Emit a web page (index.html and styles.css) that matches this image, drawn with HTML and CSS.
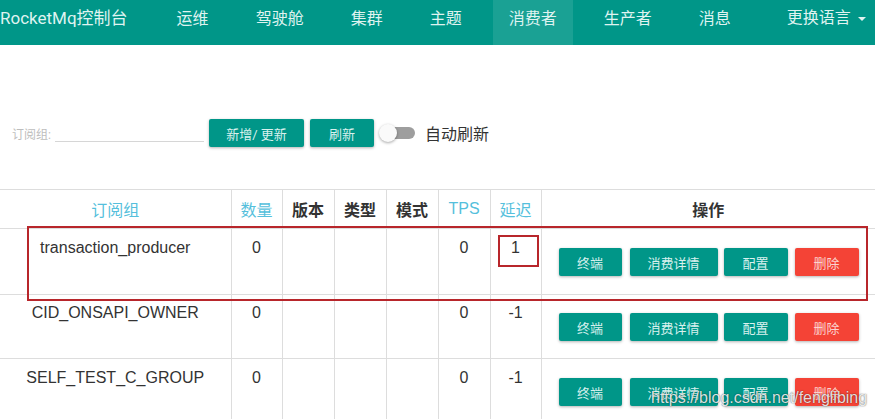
FILE: index.html
```html
<!DOCTYPE html>
<html lang="zh">
<head>
<meta charset="utf-8">
<title>RocketMq控制台</title>
<link rel="stylesheet" href="styles.css">
</head>
<body>
<nav class="navbar">
  <div class="brand">RocketMq控制台</div>
  <ul class="nav-items">
    <li>运维</li>
    <li>驾驶舱</li>
    <li>集群</li>
    <li>主题</li>
    <li class="active">消费者</li>
    <li>生产者</li>
    <li>消息</li>
  </ul>
  <div class="lang">更换语言<span class="caret"></span></div>
</nav>

<div class="toolbar">
  <span class="label">订阅组:</span>
  <div class="input"></div>
  <button class="btn btn-add">新增/ 更新</button>
  <button class="btn btn-refresh">刷新</button>
  <div class="toggle"><span class="track"></span><span class="knob"></span></div>
  <span class="toggle-label">自动刷新</span>
</div>

<div class="table-wrap">
  <table class="grid">
    <colgroup>
      <col class="c-group"><col class="c-num"><col class="c-num2"><col class="c-num2"><col class="c-num2"><col class="c-num2"><col class="c-num"><col>
    </colgroup>
    <thead>
      <tr>
        <th class="sort">订阅组</th>
        <th class="sort">数量</th>
        <th>版本</th>
        <th>类型</th>
        <th>模式</th>
        <th class="sort">TPS</th>
        <th class="sort">延迟</th>
        <th>操作</th>
      </tr>
    </thead>
    <tbody>
      <tr class="r1">
        <td>transaction_producer</td>
        <td>0</td><td></td><td></td><td></td>
        <td>0</td><td>1</td>
        <td class="ops"><div class="ops-row"><button class="btn b1">终端</button><button class="btn b2">消费详情</button><button class="btn b3">配置</button><button class="btn b4 danger">删除</button></div></td>
      </tr>
      <tr class="r2">
        <td>CID_ONSAPI_OWNER</td>
        <td>0</td><td></td><td></td><td></td>
        <td>0</td><td>-1</td>
        <td class="ops"><div class="ops-row"><button class="btn b1">终端</button><button class="btn b2">消费详情</button><button class="btn b3">配置</button><button class="btn b4 danger">删除</button></div></td>
      </tr>
      <tr class="r3">
        <td>SELF_TEST_C_GROUP</td>
        <td>0</td><td></td><td></td><td></td>
        <td>0</td><td>-1</td>
        <td class="ops"><div class="ops-row"><button class="btn b1">终端</button><button class="btn b2">消费详情</button><button class="btn b3">配置</button><button class="btn b4 danger">删除</button></div></td>
      </tr>
    </tbody>
  </table>
</div>

<div class="mark mark-row"></div>
<div class="mark mark-cell"></div>
<div class="watermark">https://blog.csdn.net/fenglibing</div>
</body>
</html>
```

FILE: styles.css
```css
html, body {
  margin: 0;
  padding: 0;
  background: #fff;
  overflow: hidden;
}
body {
  width: 875px;
  height: 419px;
  position: relative;
  font-family: Roboto, "Noto Sans CJK SC", sans-serif;
  color: #333;
}

/* navbar */
.navbar {
  display: flex;
  align-items: flex-start;
  height: 45px;
  background: #009688;
  color: #dff3f0;
}
.brand {
  font-size: 17px;
  line-height: 37px;
  margin-right: 33px;
  white-space: nowrap;
}
.nav-items {
  display: flex;
  gap: 15px;
  list-style: none;
  margin: 0;
  padding: 0;
}
.nav-items li {
  font-size: 16px;
  line-height: 37px;
  height: 45px;
  padding: 0 16px;
  white-space: nowrap;
}
.nav-items li.active {
  background: #1aa194;
}
.lang {
  margin-left: 40px;
  font-size: 16px;
  line-height: 35px;
  white-space: nowrap;
  display: flex;
  align-items: center;
}
.caret {
  display: inline-block;
  width: 0;
  height: 0;
  margin-left: 7px;
  margin-top: 2px;
  border-left: 4px solid transparent;
  border-right: 4px solid transparent;
  border-top: 4px solid #dff3f0;
}

/* toolbar */
.toolbar {
  display: flex;
  align-items: center;
  height: 28px;
  margin-top: 74px;
  padding-left: 12px;
}
.label {
  font-size: 12px;
  color: #bdbdbd;
}
.input {
  width: 149px;
  height: 17px;
  margin-left: 4px;
  border-bottom: 1px solid #d6d6d6;
}
.btn {
  border: none;
  border-radius: 2px;
  background: #009688;
  color: #d9f1ee;
  font-family: Roboto, "Noto Sans CJK SC", sans-serif;
  font-size: 13px;
  height: 28px;
  padding: 0;
  box-shadow: 0 1px 3px rgba(0, 0, 0, 0.3);
}
.btn-add {
  width: 95px;
  margin-left: 5px;
}
.btn-refresh {
  width: 64px;
  margin-left: 6px;
}
.toggle {
  position: relative;
  width: 36px;
  height: 18px;
  margin-left: 5px;
}
.track {
  position: absolute;
  left: 4px;
  top: 3px;
  width: 32px;
  height: 12px;
  border-radius: 6px;
  background: #9e9e9e;
}
.knob {
  position: absolute;
  left: 0;
  top: 0;
  width: 18px;
  height: 18px;
  border-radius: 50%;
  background: #fafafa;
  box-shadow: 0 1px 3px rgba(0, 0, 0, 0.35);
}
.toggle-label {
  margin-left: 10px;
  font-size: 16px;
  color: #333;
}

/* table */
.table-wrap {
  margin-top: 42px;
}
.grid {
  width: 875px;
  border-collapse: collapse;
  table-layout: fixed;
}
.c-group { width: 231px; }
.c-num { width: 51px; }
.c-num2 { width: 52px; }
.grid th, .grid td {
  border: 1px solid #dddddd;
  padding: 0;
  text-align: center;
  font-family: "Liberation Sans", "Noto Sans CJK SC", sans-serif;
}
.grid tr > :first-child { border-left: none; }
.grid tr > :last-child { border-right: none; }
.grid th {
  height: 38px;
  font-size: 16px;
  font-weight: bold;
  color: #333;
}
.grid th.sort {
  font-weight: normal;
  color: #55bfdc;
}
.grid td {
  vertical-align: top;
  font-size: 16px;
  line-height: 18px;
  padding-top: 10px;
  color: #333;
}
.grid tr.r1 td { height: 55px; }
.grid tr.r2 td { height: 54px; }
.grid tr.r3 td { height: 59px; }
.grid tr.r2 td { padding-top: 9px; }
.grid tr.r3 td { padding-top: 10px; }
.ops-row {
  display: flex;
  padding-left: 17px;
  padding-top: 9px;
}
.grid tr.r3 .ops-row { padding-top: 9px; }
.ops .btn { height: 28px; }
.b1 { width: 63px; }
.b2 { width: 88px; margin-left: 8px; }
.b3 { width: 64px; margin-left: 6px; }
.b4 { width: 64px; margin-left: 7px; }
.danger { background: #f44336; color: #fbd3d0; }

/* annotations */
.mark {
  position: absolute;
  border: 2px solid #b8262b;
  box-sizing: border-box;
}
.mark-row {
  left: 27px;
  top: 226px;
  width: 841px;
  height: 75px;
}
.mark-cell {
  left: 498px;
  top: 235px;
  width: 41px;
  height: 32px;
}
.watermark {
  position: absolute;
  left: 651px;
  top: 389px;
  font-family: "Liberation Sans", sans-serif;
  font-size: 16px;
  color: rgba(255, 255, 255, 0.85);
  text-shadow: 0 0 1px rgba(0, 0, 0, 0.5), 0 0 2px rgba(0, 0, 0, 0.3);
  white-space: nowrap;
  pointer-events: none;
}
```
